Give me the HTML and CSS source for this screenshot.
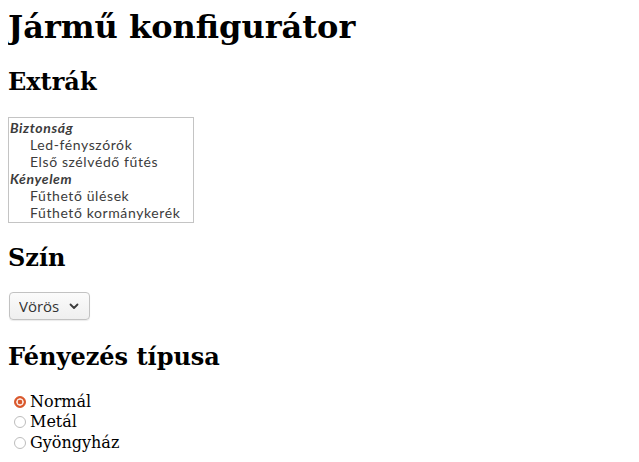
FILE: index.html
```html
<!DOCTYPE html>
<html lang="hu">
<head>
<meta charset="utf-8">
<title>Jármű konfigurátor</title>
<link rel="stylesheet" href="styles.css">
</head>
<body>
<h1 class="title">Jármű konfigurátor</h1>
<h2>Extrák</h2>
<div class="extras-wrap">
  <div class="extras" role="listbox" aria-multiselectable="true" aria-label="Extrák">
    <div class="group" role="group" aria-label="Biztonság">
      <div class="group-label">Biztonság</div>
      <div class="opt" role="option">Led-fényszórók</div>
      <div class="opt" role="option">Első szélvédő fűtés</div>
    </div>
    <div class="group" role="group" aria-label="Kényelem">
      <div class="group-label">Kényelem</div>
      <div class="opt" role="option">Fűthető ülések</div>
      <div class="opt" role="option">Fűthető kormánykerék</div>
    </div>
  </div>
</div>
<h2>Szín</h2>
<div class="select-wrap">
  <select class="color">
    <option>Vörös</option>
    <option>Kék</option>
    <option>Fekete</option>
  </select>
  <svg class="chev" width="10" height="7" viewBox="0 0 10 7"><path d="M1.5 1.5 L5 5 L8.5 1.5" fill="none" stroke="#3c3c3c" stroke-width="1.8" stroke-linecap="round" stroke-linejoin="round"/></svg>
</div>
<h2>Fényezés típusa</h2>
<div class="radios">
  <label class="radio"><input type="radio" name="paint" checked>Normál</label>
  <label class="radio"><input type="radio" name="paint">Metál</label>
  <label class="radio"><input type="radio" name="paint">Gyöngyház</label>
</div>
</body>
</html>
```

FILE: styles.css
```css
body {
  margin: 8px;
  font-family: "DejaVu Serif", serif;
  color: #000;
  background: #fff;
}

.title {
  margin-top: 0;
}

.extras-wrap {
  padding-top: 1px;
}

.extras {
  box-sizing: border-box;
  width: 186px;
  height: 106px;
  padding: 1px 0 0 1px;
  border: 1px solid #c4c4c4;
  font-family: Lato, "Open Sans", sans-serif;
  font-size: 14px;
  line-height: 17px;
  letter-spacing: 0.6px;
  color: #3c3c3c;
  background: #fff;
  overflow: hidden;
}

.group-label {
  font-weight: bold;
  font-style: italic;
  height: 17px;
}

.opt {
  padding-left: 20px;
  height: 17px;
  white-space: nowrap;
}

.select-wrap {
  position: relative;
  display: flex;
  width: max-content;
  margin-left: 1px;
  padding-bottom: 2px;
}

.color {
  appearance: none;
  -webkit-appearance: none;
  width: 81px;
  height: 28px;
  margin: 0;
  padding: 0 0 0 9px;
  border: 1px solid #c2c2c2;
  border-radius: 4px;
  background: linear-gradient(#fbfbfb, #efefef);
  font-family: "Open Sans", "Noto Sans", sans-serif;
  font-size: 15px;
  color: #333;
  box-shadow: 0 1px 1px rgba(0, 0, 0, 0.08);
}

.chev {
  position: absolute;
  right: 11px;
  top: 11px;
  pointer-events: none;
}

.radios {
  display: flex;
  flex-direction: column;
  margin-top: 4px;
}

.radio {
  display: flex;
  align-items: center;
  height: 20.5px;
}

.radio input {
  appearance: none;
  -webkit-appearance: none;
  width: 12px;
  height: 12px;
  margin: 1px 4px 0 6px;
  border: 1px solid #bdbdbd;
  border-radius: 50%;
  background: #fff;
}

.radio input:checked {
  border-color: #d9572b;
  background: radial-gradient(circle, #d9572b 0 2px, #fbe9e3 2.6px 3.4px, #d9572b 4px);
}
```
